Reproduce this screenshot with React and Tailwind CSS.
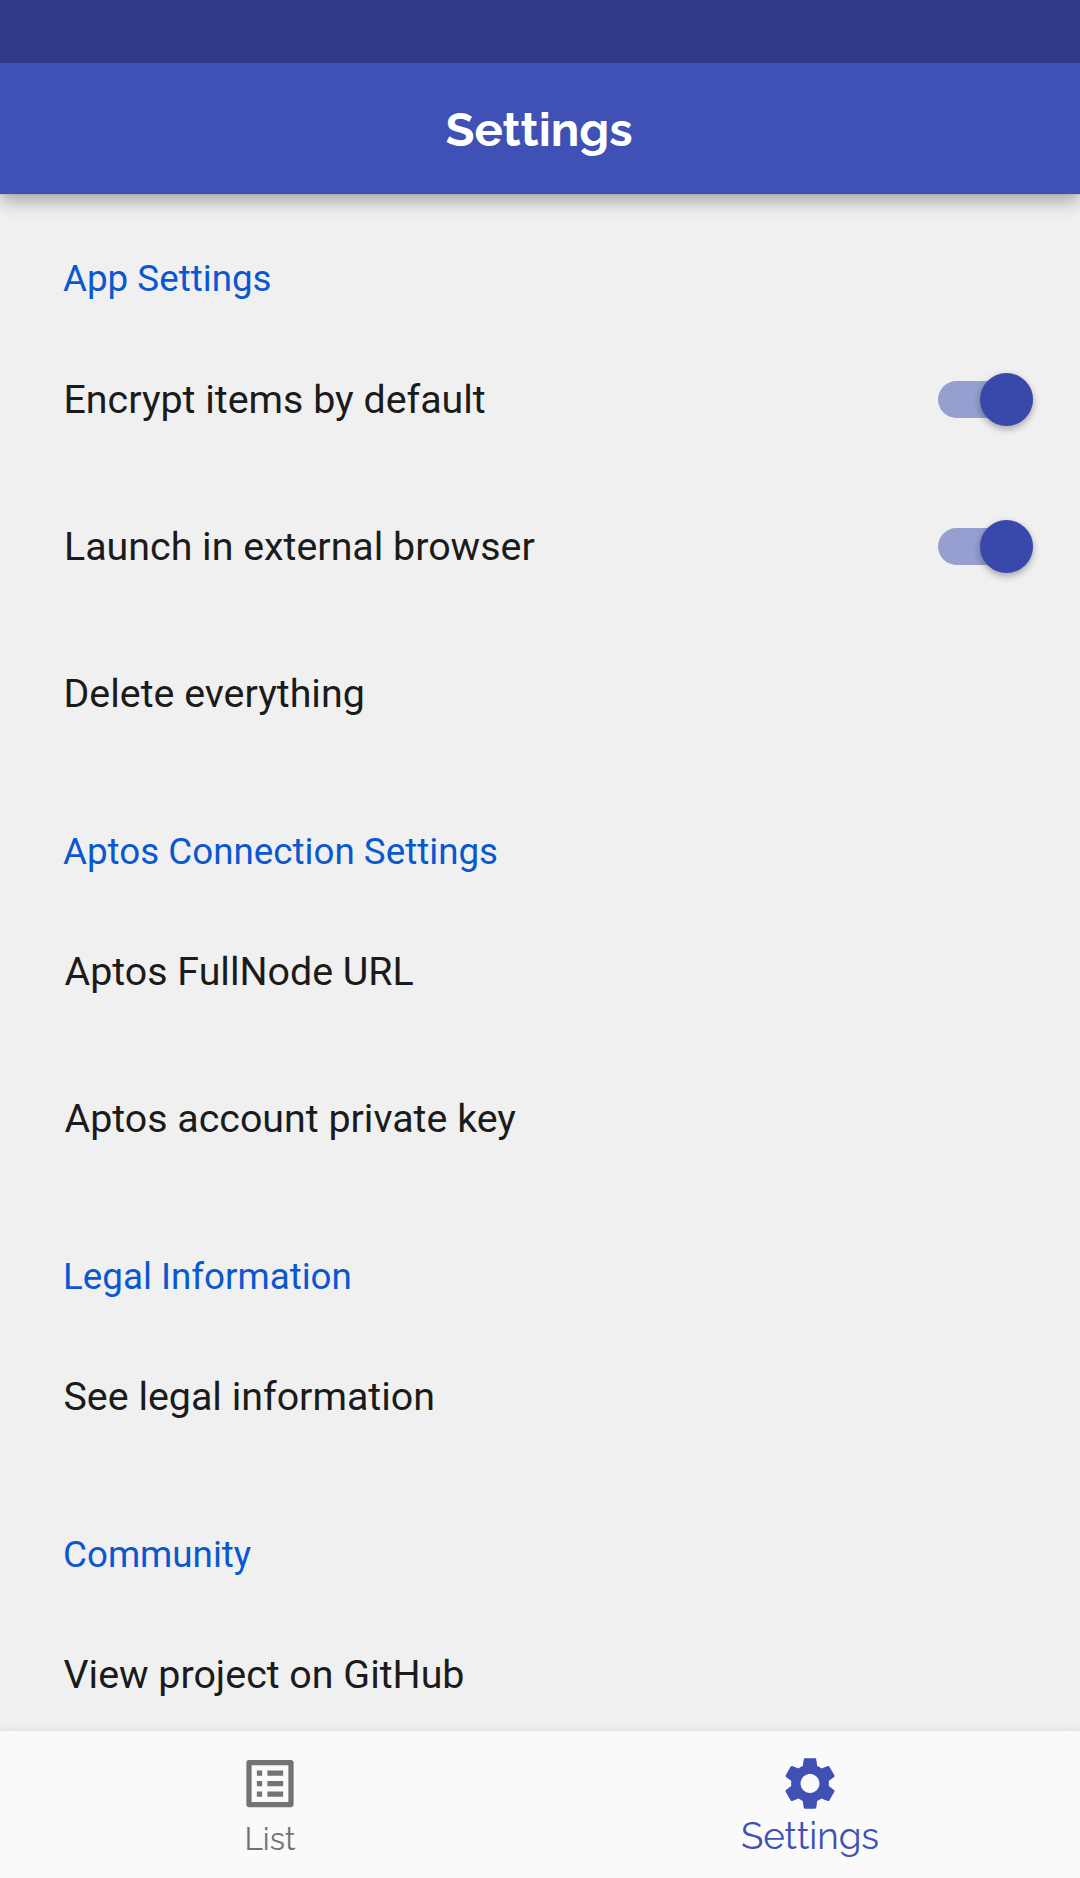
import { MdListAlt, MdSettings } from "react-icons/md";

function Heading({ children, className = "mt-[63px] mb-6" }) {
  return (
    <h2 className={"pl-[63px] text-[36.75px] leading-[44px] whitespace-nowrap text-[#0b57d0] " + className}>
      {children}
    </h2>
  );
}

function Toggle() {
  return (
    <span className="flex h-[37px] w-[95px] items-center justify-end overflow-visible rounded-full bg-[#979fd1]">
      <span className="size-[53px] shrink-0 rounded-full bg-[#3949ab] shadow-[0_3px_7px_rgba(0,0,0,0.32)]" />
    </span>
  );
}

function Row({ children, toggle, inset = "pl-[63.5px]" }) {
  return (
    <div className={"flex h-[147px] items-center justify-between pr-[47px] " + inset}>
      <span className="text-[39.375px] leading-[48px] whitespace-nowrap text-[#1b1b1b]">{children}</span>
      {toggle && <Toggle />}
    </div>
  );
}

export default function App() {
  return (
    <div className="flex h-[1878px] w-[1080px] flex-col overflow-hidden bg-[#f0f0f0] font-[Roboto,sans-serif]">
      <div className="z-20 h-[63px] shrink-0 bg-[#303b87]" />
      <header className="z-10 flex h-[131px] shrink-0 items-center justify-center bg-[#3f51b5] pt-[3px] pr-[2px] shadow-[0_9px_16px_-1px_rgba(0,0,0,0.29),0_0_2px_rgba(0,0,0,0.2)]">
        <h1 className="font-[Raleway,sans-serif] text-[47.25px] font-bold text-white">Settings</h1>
      </header>
      <main className="min-h-0 flex-1 overflow-hidden">
        <Heading className="mt-[63px] mb-[25px]">App Settings</Heading>
        <Row toggle>Encrypt items by default</Row>
        <Row toggle inset="pl-16">Launch in external browser</Row>
        <Row>Delete everything</Row>
        <Heading>Aptos Connection Settings</Heading>
        <Row inset="pl-[64.5px]">Aptos FullNode URL</Row>
        <Row inset="pl-[64.5px]">Aptos account private key</Row>
        <Heading>Legal Information</Heading>
        <Row>See legal information</Row>
        <Heading>Community</Heading>
        <Row>View project on GitHub</Row>
      </main>
      <nav className="z-10 flex h-[147px] shrink-0 bg-[#fafafa] pt-[21px] font-[Raleway,sans-serif] whitespace-nowrap shadow-[0_0_10px_rgba(0,0,0,0.1)]">
        <div className="flex flex-1 flex-col items-center text-[#737373]">
          <MdListAlt className="h-[63px] w-16" />
          <span className="mt-[5px] text-[31.5px] leading-[38px]">List</span>
        </div>
        <div className="flex flex-1 flex-col items-center text-[#3f51b5]">
          <MdSettings className="h-[63px] w-16" />
          <span className="-mt-px text-[36.75px] leading-[44px]">Settings</span>
        </div>
      </nav>
    </div>
  );
}
